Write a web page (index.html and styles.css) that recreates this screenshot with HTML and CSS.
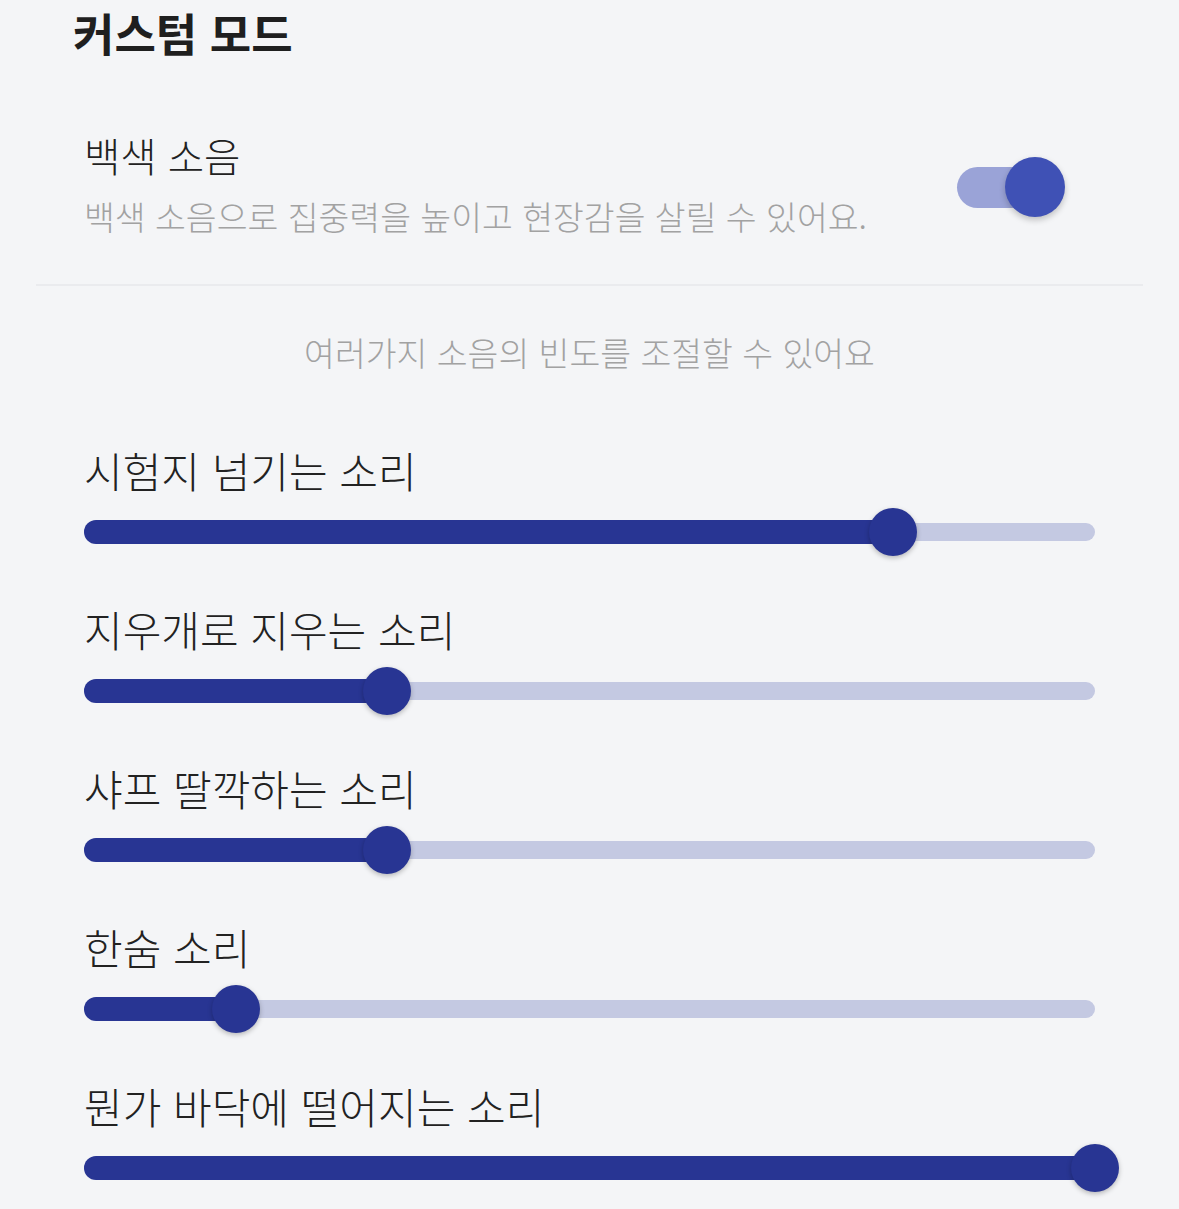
FILE: index.html
```html
<!DOCTYPE html>
<html lang="ko">
<head>
<meta charset="utf-8">
<link rel="stylesheet" href="styles.css">
</head>
<body>
<main class="page">
  <h1 class="title">커스텀 모드</h1>

  <section class="setting">
    <div class="setting-text">
      <div class="setting-label">백색 소음</div>
      <div class="setting-desc">백색 소음으로 집중력을 높이고 현장감을 살릴 수 있어요.</div>
    </div>
    <div class="toggle on">
      <span class="toggle-track"></span>
      <span class="toggle-thumb"></span>
    </div>
  </section>

  <hr class="divider">

  <p class="hint">여러가지 소음의 빈도를 조절할 수 있어요</p>

  <section class="sliders">
    <div class="slider-item">
      <div class="slider-label">시험지 넘기는 소리</div>
      <div class="slider" style="--v:80%">
        <span class="slider-rail"></span>
        <span class="slider-fill"></span>
        <span class="slider-thumb"></span>
      </div>
    </div>
    <div class="slider-item">
      <div class="slider-label">지우개로 지우는 소리</div>
      <div class="slider" style="--v:30%">
        <span class="slider-rail"></span>
        <span class="slider-fill"></span>
        <span class="slider-thumb"></span>
      </div>
    </div>
    <div class="slider-item">
      <div class="slider-label">샤프 딸깍하는 소리</div>
      <div class="slider" style="--v:30%">
        <span class="slider-rail"></span>
        <span class="slider-fill"></span>
        <span class="slider-thumb"></span>
      </div>
    </div>
    <div class="slider-item">
      <div class="slider-label">한숨 소리</div>
      <div class="slider" style="--v:15%">
        <span class="slider-rail"></span>
        <span class="slider-fill"></span>
        <span class="slider-thumb"></span>
      </div>
    </div>
    <div class="slider-item">
      <div class="slider-label">뭔가 바닥에 떨어지는 소리</div>
      <div class="slider" style="--v:100%">
        <span class="slider-rail"></span>
        <span class="slider-fill"></span>
        <span class="slider-thumb"></span>
      </div>
    </div>
  </section>
</main>
</body>
</html>
```

FILE: styles.css
```css
* { box-sizing: border-box; }

html, body {
  margin: 0;
  padding: 0;
  background: #f4f5f7;
}

body {
  font-family: "Noto Sans CJK KR", "Noto Sans", sans-serif;
  color: #222222;
  width: 1179px;
  height: 1209px;
  overflow: hidden;
}

.page {
  display: flex;
  flex-direction: column;
}

.title {
  margin: 0;
  padding-left: 73px;
  font-size: 45px;
  font-weight: 700;
  line-height: 66px;
  color: #1f1f1f;
}

.setting {
  margin-top: 64px;
  padding: 0 114px 0 84px;
  display: flex;
  align-items: center;
  justify-content: space-between;
}

.setting-label {
  font-size: 39.5px;
  font-weight: 300;
  line-height: 50px;
  color: #222222;
}

.setting-desc {
  margin-top: 13px;
  font-size: 33.5px;
  font-weight: 300;
  line-height: 46px;
  color: #a2a2a2;
}

.toggle {
  position: relative;
  width: 108px;
  height: 60px;
  margin-top: 5px;
  flex: none;
}

.toggle-track {
  position: absolute;
  left: 0;
  top: 9.5px;
  width: 83px;
  height: 41px;
  border-radius: 21px;
  background: #9aa3d7;
}

.toggle-thumb {
  position: absolute;
  right: 0;
  top: 0;
  width: 60px;
  height: 60px;
  border-radius: 50%;
  background: #3f51b5;
  box-shadow: 0 3px 6px rgba(0, 0, 0, 0.22);
}

.divider {
  margin: 45px 36px 0;
  border: 0;
  height: 2px;
  background: #eaebee;
}

.hint {
  margin: 43px 0 0;
  text-align: center;
  font-size: 33.5px;
  font-weight: 300;
  line-height: 46px;
  color: #a2a2a2;
}

.sliders {
  margin-top: 70px;
  padding: 0 84px;
  display: flex;
  flex-direction: column;
  gap: 48px;
}

.slider-item {
  display: flex;
  flex-direction: column;
  gap: 13px;
}

.slider-label {
  font-size: 42px;
  font-weight: 300;
  line-height: 50px;
  color: #222222;
}

.slider {
  position: relative;
  height: 48px;
}

.slider-rail {
  position: absolute;
  left: 0;
  right: 0;
  top: 15px;
  height: 18px;
  border-radius: 9px;
  background: #c4c9e2;
}

.slider-fill {
  position: absolute;
  left: 0;
  top: 12px;
  height: 24px;
  width: var(--v);
  border-radius: 12px;
  background: #283593;
}

.slider-thumb {
  position: absolute;
  top: 0;
  left: var(--v);
  width: 48px;
  height: 48px;
  margin-left: -24px;
  border-radius: 50%;
  background: #283593;
  box-shadow: 0 2px 5px rgba(0, 0, 0, 0.25);
}
```
